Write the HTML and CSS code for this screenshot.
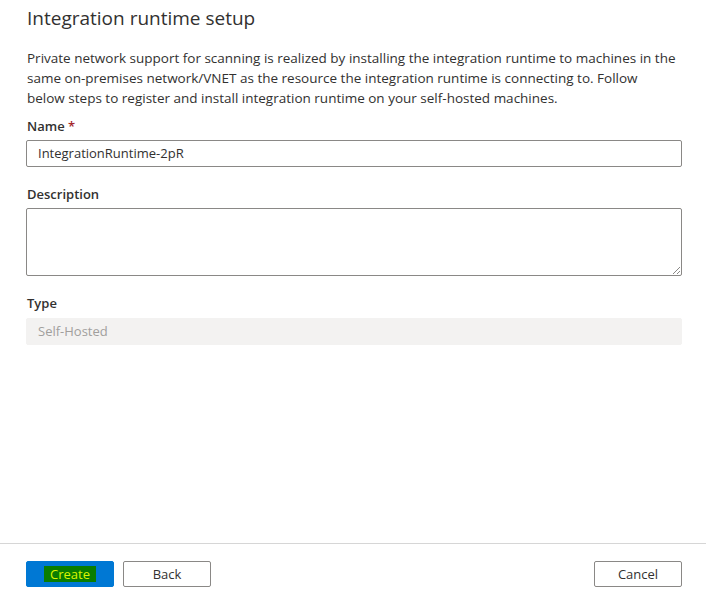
FILE: index.html
```html
<!DOCTYPE html>
<html>
<head>
<meta charset="utf-8">
<link rel="stylesheet" href="styles.css">
</head>
<body>
<div class="panel">
  <div class="content">
    <h1 class="title">Integration runtime setup</h1>
    <p class="intro">Private network support for scanning is realized by installing the integration runtime to machines in the same on-premises network/VNET as the resource the integration runtime is connecting to. Follow below steps to register and install integration runtime on your self-hosted machines.</p>
    <div class="field">
      <label class="label">Name <span class="req">*</span></label>
      <div class="input">IntegrationRuntime-2pR</div>
    </div>
    <div class="field field-desc">
      <label class="label">Description</label>
      <div class="textarea"><span class="grip"></span></div>
    </div>
    <div class="field field-type">
      <label class="label label-type">Type</label>
      <div class="input disabled">Self-Hosted</div>
    </div>
  </div>
  <div class="footer">
    <div class="btn-group">
      <button class="btn primary"><span class="hl">Create</span></button>
      <button class="btn">Back</button>
    </div>
    <button class="btn">Cancel</button>
  </div>
</div>
</body>
</html>
```
FILE: styles.css
```css
* { box-sizing: border-box; }
html, body { margin: 0; padding: 0; background: #fff; }
body {
  font-family: "Open Sans", "Noto Sans", sans-serif;
  color: #323130;
  width: 706px;
  height: 604px;
  overflow: hidden;
}
.panel {
  height: 604px;
  display: flex;
  flex-direction: column;
}
.content {
  flex: 1;
  padding: 0 24px 0 26px;
}
.title {
  margin: 4px 0 0 1px;
  font-size: 19px;
  font-weight: 400;
  line-height: 28px;
  color: #323130;
}
.intro {
  margin: 16px 4px 0 1px;
  font-size: 13.5px;
  line-height: 20px;
}
.field { margin-top: 8px; }
.field-desc { margin-top: 17px; }
.field-type { margin-top: 17px; }
.label {
  display: block;
  font-size: 13px;
  font-weight: 600;
  line-height: 20px;
  margin-left: 1px;
  padding-bottom: 4px;
}
.label-type { padding-bottom: 5px; }
.req { color: #a4262c; }
.input {
  height: 27px;
  border: 1px solid #8a8886;
  border-radius: 2px;
  font-size: 13px;
  line-height: 25px;
  padding: 0 11px;
}
.input.disabled {
  border-color: #f3f2f1;
  background: #f3f2f1;
  color: #a19f9d;
}
.textarea {
  position: relative;
  height: 68px;
  border: 1px solid #8a8886;
  border-radius: 2px;
}
.grip {
  position: absolute;
  right: 1px;
  bottom: 1px;
  width: 7px;
  height: 7px;
  background: linear-gradient(135deg, transparent 45%, #8a8886 45%, #8a8886 55%, transparent 55%, transparent 75%, #8a8886 75%, #8a8886 85%, transparent 85%);
}
.footer {
  border-top: 1px solid #d6d6d6;
  height: 61px;
  padding: 17px 24px 0 26px;
  display: flex;
  justify-content: space-between;
  align-items: flex-start;
}
.btn-group { display: flex; gap: 9px; }
.btn {
  width: 88px;
  height: 26px;
  border: 1px solid #8a8886;
  border-radius: 2px;
  background: #fff;
  color: #323130;
  font-family: "Open Sans", "Noto Sans", sans-serif;
  font-size: 13px;
  padding: 0;
  display: flex;
  align-items: center;
  justify-content: center;
}
.btn.primary {
  background: #0078d4;
  border-color: #0078d4;
}
.hl {
  background: #0a7d00;
  color: #dcf500;
  padding: 0 6px;
  line-height: 16px;
}
```
